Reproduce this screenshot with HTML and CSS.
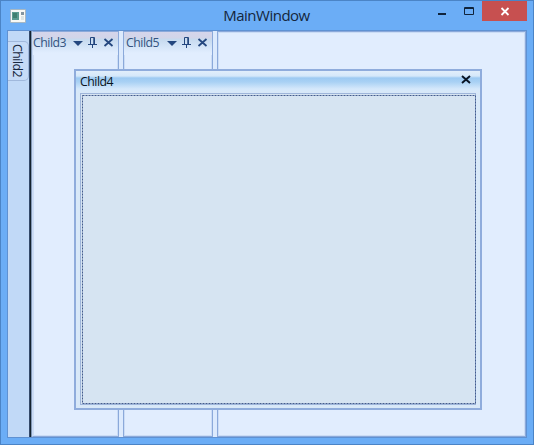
FILE: index.html
```html
<!DOCTYPE html>
<html lang="en">
<head>
<meta charset="utf-8">
<title>MainWindow</title>
<link rel="stylesheet" href="styles.css">
</head>
<body>
<div class="window">
  <header class="titlebar">
    <svg class="app-icon" width="16" height="14" viewBox="0 0 16 14"><rect width="16" height="14" rx="1" fill="#a7b8c4"/><rect x="1" y="1" width="14" height="12" fill="#f7f8f5"/><rect x="2" y="3" width="7" height="8" fill="#5c9b91"/><rect x="3" y="4" width="4" height="5" fill="#408070"/><rect x="11" y="3" width="3" height="3" fill="#8495a0"/><rect x="11" y="7" width="3" height="4" fill="#dce4e4"/></svg>
    <h1 class="title">MainWindow</h1>
    <div class="controls">
      <svg width="28" height="21" viewBox="0 0 28 21"><path d="M10 13h8" stroke="#10243c" stroke-width="2"/></svg>
      <svg width="26" height="21" viewBox="0 0 26 21"><path d="M8.500 6.500h9v7h-9zM8 7.500h10" fill="none" stroke="#10243c"/></svg>
      <svg class="close" width="45" height="20" viewBox="0 0 45 20"><path d="M19.500 7l7 7M26.500 7l-7 7" stroke="#fff" stroke-width="1.8"/></svg>
    </div>
  </header>
  <main class="client">
    <aside class="sidebar"><div class="tab">Child2</div></aside>
    <div class="divider"></div>
    <section class="pane pane-left">
      <div class="pane-head"><span>Child3</span>
        <svg width="42" height="14" viewBox="0 0 42 14"><g fill="none" stroke="#24477f"><path d="M1 4h10l-5 5z" fill="#24477f" stroke="none"/><path d="M18.500 7V.500h4V7M16 7.500h9M20.500 7v4"/><path d="M22 1v6" stroke-width="1.500"/><path d="M32.500 2l8 7M40.500 2l-8 7" stroke-width="1.800"/></g></svg>
      </div>
    </section>
    <section class="pane pane-middle">
      <div class="pane-head"><span>Child5</span>
        <svg width="42" height="14" viewBox="0 0 42 14"><g fill="none" stroke="#24477f"><path d="M1 4h10l-5 5z" fill="#24477f" stroke="none"/><path d="M18.500 7V.500h4V7M16 7.500h9M20.500 7v4"/><path d="M22 1v6" stroke-width="1.500"/><path d="M32.500 2l8 7M40.500 2l-8 7" stroke-width="1.800"/></g></svg>
      </div>
    </section>
    <section class="pane pane-main"></section>
  </main>
  <div class="float">
    <div class="float-head"><span>Child4</span>
      <svg width="10" height="9" viewBox="0 0 10 9"><path d="M1 1l8 7M9 1l-8 7" stroke="#081424" stroke-width="1.9"/></svg>
    </div>
    <div class="float-body">
      <svg class="focus" width="394" height="309" viewBox="0 0 394 309"><rect x=".5" y=".5" width="393" height="308" fill="none" stroke="#435b8c" stroke-dasharray="2 1"/></svg>
    </div>
  </div>
</div>
</body>
</html>
```
FILE: styles.css
```css
* { box-sizing: border-box; }
body { margin: 0; font-family: "Open Sans", "Noto Sans", sans-serif; overflow: hidden; }
.window {
  position: relative;
  width: 534px;
  height: 445px;
  display: flex;
  flex-direction: column;
  background: #6badf6;
  border: 1px solid #4b84c6;
  padding: 0 6px 6px;
}
.titlebar {
  height: 29px;
  flex: none;
  display: grid;
  grid-template-columns: 99px 1fr 99px;
}
.app-icon { margin: 8px 0 0 3px; }
.title {
  margin: 4px 1px 0 0;
  text-align: center;
  font-size: 15px;
  line-height: 20px;
  font-weight: 400;
  letter-spacing: -0.5px;
  color: #14263c;
}
.controls { display: flex; }
.controls svg { flex: none; }
.close { background: #c75050; }
.client {
  flex: 1;
  display: flex;
  background: #dceafd;
  border: 1px solid #5f91d2;
}
.sidebar { width: 21px; flex: none; background: #c1d9f7; padding-top: 10px; }
.tab {
  width: 21px;
  height: 40px;
  border: 1px solid #a0b8dc;
  border-left: 0;
  border-radius: 0 5px 5px 0;
  writing-mode: vertical-rl;
  font-size: 12.3px;
  line-height: 22px;
  padding-top: 2px;
  letter-spacing: -0.5px;
  color: #182840;
  background: #c6dbf7;
}
.divider { width: 3px; flex: none; background: linear-gradient(90deg, #33496a 0 1px, #14232f 1px 2px, #8096b4 2px); }
.pane {
  flex: none;
  background: #e1edfe;
  border: 1px solid #8ba9da;
  box-shadow: inset 0 0 0 1px #cbdcf5;
}
.pane-left { width: 87px; margin-right: 4px; border-left-color: #c9daf4; }
.pane-middle { width: 90px; margin-right: 4px; }
.pane-main { flex: 1; }
.pane-head {
  height: 23px;
  display: flex;
  justify-content: space-between;
  padding: 2px 4px 0 0;
  background: linear-gradient(#d5d5eb 0, #d2d5e9 6px, #c6d9ee 7px, #d3e4f7 14px, #e1edfe 21px);
  font-size: 12.3px;
  line-height: 17px;
  letter-spacing: -0.5px;
  color: #34537f;
}
.pane-middle .pane-head { padding-left: 2px; }
.pane-head svg { margin-top: 3px; flex: none; }
.float {
  position: absolute;
  left: 73px;
  top: 68px;
  width: 408px;
  height: 341px;
  display: flex;
  flex-direction: column;
  padding: 0 4px 4px;
  border: 2px solid #8facdc;
  background: #d8e8f8;
}
.float-head {
  height: 22px;
  flex: none;
  display: flex;
  justify-content: space-between;
  margin: 0 -4px;
  padding: 0 9px 0 4px;
  background: linear-gradient(#e1eefb 0, #d5e8fa 5px, #9dcaf2 7px, #a9d1f4 11px, #d5e8fb 18px, #d8e8f8 22px);
  font-size: 12.3px;
  line-height: 21px;
  letter-spacing: -0.5px;
  color: #0a1420;
}
.float-head svg { margin-top: 4px; }
.float-body { flex: 1; display: flex; border: 1px solid #9eb5da; background: #d6e4f2; padding: 1px 0 0 1px; }
.focus { flex: none; }
```
